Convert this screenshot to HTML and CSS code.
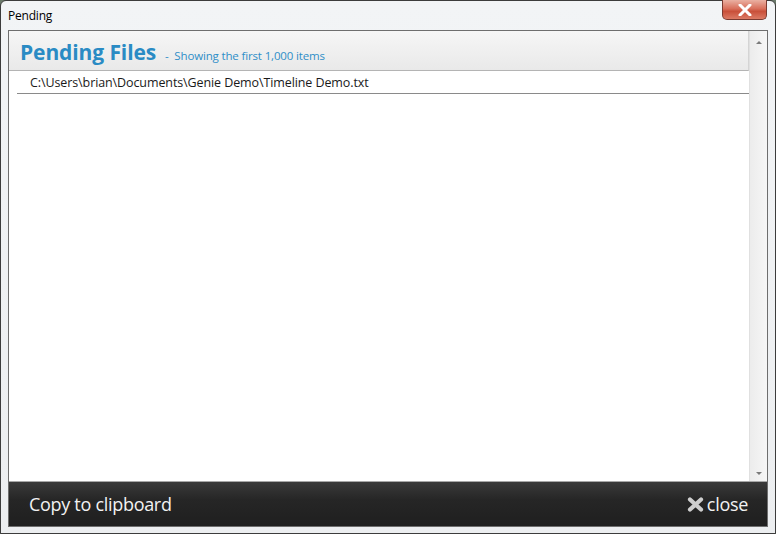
FILE: index.html
```html
<!DOCTYPE html>
<html>
<head>
<meta charset="utf-8">
<link rel="stylesheet" href="styles.css">
</head>
<body>
<div class="window">
  <div class="titlebar">
    <span class="title">Pending</span>
    <div class="close-btn">
      <svg width="14" height="12" viewBox="0 0 14 12"><path d="M2 1 L12 11 M12 1 L2 11" stroke="#fff" stroke-width="3" stroke-linecap="round"/></svg>
    </div>
  </div>
  <div class="client">
    <div class="main">
      <div class="list">
        <div class="header">
          <span class="h-title">Pending Files</span>
          <span class="h-sub">- &nbsp;Showing the first 1,000 items</span>
        </div>
        <div class="rows">
          <div class="row">C:\Users\brian\Documents\Genie Demo\Timeline Demo.txt</div>
        </div>
      </div>
      <div class="scrollbar">
        <div class="arrow up"></div>
        <div class="arrow down"></div>
      </div>
    </div>
    <div class="footer">
      <span class="copy">Copy to clipboard</span>
      <span class="close">
        <svg width="17" height="15" viewBox="0 0 17 15"><path d="M3 2.5 L14 12.5 M14 2.5 L3 12.5" stroke="#cfcfcf" stroke-width="4.2" stroke-linecap="round"/></svg>
        close
      </span>
    </div>
  </div>
</div>
</body>
</html>
```
FILE: styles.css
```css
html, body {
  margin: 0;
  padding: 0;
  width: 776px;
  height: 534px;
  overflow: hidden;
  background: #6a7a6a;
}
.window {
  box-sizing: border-box;
  width: 776px;
  height: 534px;
  border: 1px solid #3c3c3c;
  border-radius: 6px 6px 0 0;
  background: linear-gradient(#f2f4f6, #eceef0);
  display: flex;
  flex-direction: column;
  font-family: "Open Sans", "Noto Sans", sans-serif;
}
.titlebar {
  height: 29px;
  flex: none;
  display: flex;
  align-items: flex-start;
  justify-content: space-between;
  padding: 0 8px 0 7px;
}
.title {
  font-size: 12px;
  color: #000;
  margin-top: 6px;
  letter-spacing: -0.2px;
}
.close-btn {
  width: 43px;
  height: 19px;
  margin-top: -1px;
  border: 1px solid #7a3a30;
  border-top: none;
  border-radius: 0 0 5px 5px;
  background: linear-gradient(#eab0a2, #d9705c 45%, #c9503a 60%, #dc7a64);
  display: flex;
  align-items: center;
  justify-content: center;
}
.client {
  flex: 1;
  margin: 0 7px 6px 7px;
  border: 1px solid #6e6e6e;
  display: flex;
  flex-direction: column;
  background: #fff;
}
.main {
  flex: 1;
  display: flex;
  min-height: 0;
}
.list {
  flex: 1;
  display: flex;
  flex-direction: column;
}
.header {
  height: 40px;
  box-sizing: border-box;
  background: linear-gradient(#f6f6f6, #e9e9e9);
  border-bottom: 1px solid #b4b4b4;
  border-right: 1px solid #d4d4d4;
  display: flex;
  align-items: baseline;
  padding: 7px 0 0 11px;
}
.h-title {
  font-size: 21px;
  font-weight: bold;
  color: #2a8bc4;
  letter-spacing: -0.1px;
}
.h-sub {
  font-size: 11.5px;
  color: #2f8ec8;
  margin-left: 9px;
  letter-spacing: -0.15px;
}
.rows {
  flex: 1;
  padding-left: 8px;
}
.row {
  height: 23px;
  box-sizing: border-box;
  border-bottom: 1px solid #8a8a8a;
  font-size: 12.5px;
  color: #1a1a1a;
  padding: 3px 0 0 13px;
  letter-spacing: -0.1px;
}
.scrollbar {
  width: 17px;
  flex: none;
  background: linear-gradient(90deg, #ececec, #f6f6f6);
  border-left: 1px solid #e0e0e0;
  display: flex;
  flex-direction: column;
  justify-content: space-between;
  align-items: center;
  padding: 10px 0 6px;
}
.arrow {
  width: 0;
  height: 0;
  border-left: 3px solid transparent;
  border-right: 3px solid transparent;
}
.arrow.up { border-bottom: 3px solid #7a7a7a; }
.arrow.down { border-top: 3px solid #7a7a7a; }
.footer {
  height: 44px;
  flex: none;
  border-top: 1px solid #a8a8a8;
  background: linear-gradient(#3a3a3a, #262626 40%, #1f1f1f);
  display: flex;
  align-items: center;
  justify-content: space-between;
  padding: 0 19px 0 20px;
  color: #f2f2f2;
  font-size: 18px;
}
.copy { letter-spacing: -0.3px; }
.close {
  display: flex;
  align-items: center;
  gap: 3px;
  letter-spacing: -0.3px;
}
```
